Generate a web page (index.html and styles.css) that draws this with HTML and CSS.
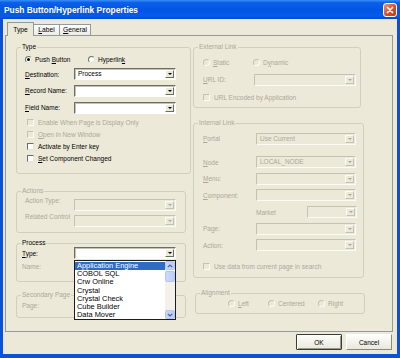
FILE: index.html
```html
<!doctype html>
<html>
<head>
    <meta charset="UTF-8">
    <title>Push Button/Hyperlink Properties</title>
    <link rel="stylesheet" href="styles.css">
</head>
<body>
<div class="window">
    <div class="titlebar">
        <span class="title">Push Button/Hyperlink Properties</span>
        <span class="close">
            <svg width="8" height="8" viewBox="0 0 8 8"><path d="M1.5 1.5L6.5 6.5M6.5 1.5L1.5 6.5" stroke="#fff" stroke-width="1.7" stroke-linecap="round"/></svg>
        </span>
    </div>
    <div class="frame">
        <div class="tabs">
            <div class="tab t-type active">Type</div>
            <div class="tab t-label"><u>L</u>abel</div>
            <div class="tab t-general"><u>G</u>eneral</div>
        </div>
        <div class="panel">
            <div class="col-left">
                <fieldset class="group g-type">
                    <legend>Type</legend>
                    <div class="rows">
                        <div class="row h14">
                            <span class="radio on w63"><i></i><span>Push <u>B</u>utton</span></span>
                            <span class="radio"><i></i><span>Hyperlin<u>k</u></span></span>
                        </div>
                        <div class="row h16">
                            <span class="lbl w49"><u>D</u>estination:</span>
                            <div class="sel"><span class="val">Process</span><span class="btn"></span></div>
                        </div>
                        <div class="row h17">
                            <span class="lbl w49"><u>R</u>ecord Name:</span>
                            <div class="sel"><span class="val"></span><span class="btn"></span></div>
                        </div>
                        <div class="row h17">
                            <span class="lbl w49"><u>F</u>ield Name:</span>
                            <div class="sel"><span class="val"></span><span class="btn"></span></div>
                        </div>
                        <div class="row h12 ind"><span class="check off"><i></i><span>Enable When Page is Display Only</span></span></div>
                        <div class="row h12 ind"><span class="check off"><i></i><span><u>O</u>pen in New Window</span></span></div>
                        <div class="row h12 ind"><span class="check"><i></i><span>Activate by Enter key</span></span></div>
                        <div class="row h12 ind"><span class="check"><i></i><span><u>S</u>et Component Changed</span></span></div>
                    </div>
                </fieldset>

                <fieldset class="group g-actions">
                    <legend class="dis">Actions</legend>
                    <div class="rows">
                        <div class="row h14 hi">
                            <span class="lbl w49 dis">Action Type:</span>
                            <div class="sel off"><span class="val"></span><span class="btn"></span></div>
                        </div>
                        <div class="row h14 hi gap2">
                            <span class="lbl w49 dis">Related Control</span>
                            <div class="sel off"><span class="val"></span><span class="btn"></span></div>
                        </div>
                    </div>
                </fieldset>

                <fieldset class="group g-process">
                    <legend>Process</legend>
                    <div class="rows">
                        <div class="row h12">
                            <span class="lbl w52"><u>T</u>ype:</span>
                            <div class="dropwrap">
                                <div class="sel"><span class="val"></span><span class="btn"></span></div>
                                <div class="droplist">
                                    <div class="items">
                                        <div class="item cur">Application Engine</div>
                                        <div class="item">COBOL SQL</div>
                                        <div class="item">Crw Online</div>
                                        <div class="item">Crystal</div>
                                        <div class="item">Crystal Check</div>
                                        <div class="item">Cube Builder</div>
                                        <div class="item">Data Mover</div>
                                    </div>
                                    <div class="vscroll">
                                        <span class="sb-btn"><svg width="6" height="4" viewBox="0 0 6 4"><path d="M0.8 3.2L3 1L5.2 3.2" fill="none" stroke="#4d6185" stroke-width="1.2"/></svg></span>
                                        <span class="sb-thumb"></span>
                                        <span class="sb-track"></span>
                                        <span class="sb-btn"><svg width="6" height="4" viewBox="0 0 6 4"><path d="M0.8 0.8L3 3L5.2 0.8" fill="none" stroke="#4d6185" stroke-width="1.2"/></svg></span>
                                    </div>
                                </div>
                            </div>
                        </div>
                        <div class="row h14">
                            <span class="lbl w52 dis">Name:</span>
                        </div>
                    </div>
                </fieldset>

                <fieldset class="group g-second">
                    <legend class="dis">Secondary Page</legend>
                    <div class="rows">
                        <div class="row h12">
                            <span class="lbl w52 dis">Page:</span>
                            <div class="sel off"><span class="val"></span><span class="btn"></span></div>
                        </div>
                    </div>
                </fieldset>
            </div>

            <div class="col-right">
                <fieldset class="group g-ext">
                    <legend class="dis">External Link</legend>
                    <div class="rows">
                        <div class="row h12">
                            <span class="radio off w50"><i></i><span><u>S</u>tatic</span></span>
                            <span class="radio off"><i></i><span>D<u>y</u>namic</span></span>
                        </div>
                        <div class="row h23">
                            <span class="lbl w51 dis"><u>U</u>RL ID:</span>
                            <div class="sel off"><span class="val"></span><span class="btn"></span></div>
                        </div>
                        <div class="row h12">
                            <span class="check off"><i></i><span>URL Encoded by Application</span></span>
                        </div>
                    </div>
                </fieldset>

                <fieldset class="group g-int">
                    <legend class="dis">Internal Link</legend>
                    <div class="rows">
                        <div class="row h17">
                            <span class="lbl w53 dis"><u>P</u>ortal</span>
                            <div class="sel off w100"><span class="val">Use Current</span><span class="btn"></span></div>
                        </div>
                        <div class="row h166 gap7">
                            <span class="lbl w53 dis"><u>N</u>ode</span>
                            <div class="sel off w100"><span class="val">LOCAL_NODE</span><span class="btn"></span></div>
                        </div>
                        <div class="row h166">
                            <span class="lbl w53 dis"><u>M</u>enu:</span>
                            <div class="sel off w100"><span class="val"></span><span class="btn"></span></div>
                        </div>
                        <div class="row h166">
                            <span class="lbl w53 dis"><u>C</u>omponent:</span>
                            <div class="sel off w100"><span class="val"></span><span class="btn"></span></div>
                        </div>
                        <div class="row h166">
                            <span class="lbl w53"></span>
                            <span class="lbl w51 dis">Market</span>
                            <div class="sel off w50"><span class="val"></span><span class="btn"></span></div>
                        </div>
                        <div class="row h166">
                            <span class="lbl w53 dis">Page:</span>
                            <div class="sel off w100"><span class="val"></span><span class="btn"></span></div>
                        </div>
                        <div class="row h166">
                            <span class="lbl w53 dis">Action:</span>
                            <div class="sel off w100"><span class="val"></span><span class="btn"></span></div>
                        </div>
                        <div class="row h12 gap7">
                            <span class="check off"><i></i><span>Use data from current page in search</span></span>
                        </div>
                    </div>
                </fieldset>

                <fieldset class="group g-align">
                    <legend class="dis">Alignment</legend>
                    <div class="rows">
                        <div class="row h12">
                            <span class="radio off w40"><i></i><span><u>L</u>eft</span></span>
                            <span class="radio off w50"><i></i><span>Centered</span></span>
                            <span class="radio off"><i></i><span>Right</span></span>
                        </div>
                    </div>
                </fieldset>
            </div>
        </div>
        <div class="buttons">
            <button type="button" class="button default">OK</button>
            <button type="button" class="button">Cancel</button>
        </div>
    </div>
</div>
</body>
</html>
```

FILE: styles.css
```css
* {
    box-sizing: border-box;
}

body {
    margin: 0;
    background: #fff;
    color: #000;
    font-family: "Liberation Sans", Arial, sans-serif;
    font-size: 6.5px;
}

.window {
    width: 400px;
    height: 358px;
    display: flex;
    flex-direction: column;
    background: #0a50d8;
}

.titlebar {
    flex: none;
    height: 19px;
    display: flex;
    align-items: center;
    padding: 0 3px 0 4px;
    background: linear-gradient(#3c8ef6 0%, #0b5fe9 14%, #0055e5 50%, #075be9 86%, #0048cc 100%);
}

.titlebar .title {
    flex: 1;
    color: #fff;
    font-size: 8.4px;
    font-weight: bold;
}

.titlebar .close {
    width: 14px;
    height: 14px;
    display: flex;
    align-items: center;
    justify-content: center;
    border: 1px solid #fff;
    border-radius: 3px;
    background: linear-gradient(135deg, #f0906e, #d8502a 55%, #c03816);
}

.frame {
    flex: 1;
    margin: 0 3px 4px;
    padding: 3px 4px 0 2px;
    background: #ece9d8;
    display: flex;
    flex-direction: column;
}

/* tabs */
.tabs {
    height: 14px;
    margin: 0 0 -1px 2px;
    display: flex;
    align-items: flex-end;
    position: relative;
    z-index: 1;
}

.tab {
    height: 11px;
    margin-bottom: 1px;
    border: 1px solid #919b9c;
    border-left: none;
    border-bottom: none;
    background: linear-gradient(#fefefe, #ecebe6);
    font-size: 6.7px;
    line-height: 10px;
    text-align: center;
}

.tab.active {
    height: 14px;
    margin-bottom: 0;
    border-left: 1px solid #919b9c;
    background: #ece9d8;
    line-height: 13px;
}

.t-type { width: 27px; }
.t-label { width: 26px; }
.t-general { width: 31px; }

.panel {
    flex: none;
    height: 297px;
    padding: 7px 0 0 10px;
    border: 1px solid #919b9c;
    background: #ece9d8;
    display: flex;
    align-items: flex-start;
}

.col-left {
    width: 175px;
    display: flex;
    flex-direction: column;
}

.col-right {
    width: 173px;
    margin-left: 2px;
    display: flex;
    flex-direction: column;
}

/* group boxes */
.group {
    min-width: 0;
    margin: 0;
    padding: 0;
    border: 1px solid #d0d0bf;
    border-radius: 3px;
}

.group legend {
    height: 8px;
    margin-left: 4px;
    padding: 0 1px;
    line-height: 8px;
}

.g-type { height: 131px; }
.g-type .rows { padding: 1px 0 0 8px; }

.g-actions { width: 170px; height: 46px; margin-top: 13px; }
.g-actions .rows { padding: 2px 0 0 8px; }

.g-process { width: 170px; height: 43px; margin-top: 6px; }
.g-process .rows { padding-left: 5px; }

.g-second { width: 170px; height: 27px; margin-top: 9px; }
.g-second .rows { padding-left: 5px; }

.g-ext { width: 168px; height: 65px; }
.g-ext .rows { padding: 5px 0 0 9px; }

.g-int { width: 171px; height: 159px; margin-top: 11px; }
.g-int .rows { padding: 3px 0 0 9px; }

.g-align { width: 170px; height: 25px; margin: 11px 0 0 2px; }
.g-align .rows { padding-left: 32px; }

/* rows */
.row {
    display: flex;
    align-items: center;
    white-space: nowrap;
}

.row.hi { align-items: flex-start; }
.row.hi .lbl { line-height: 8px; }
.row.hi .sel { margin-top: 2px; }

.h12 { height: 12px; }
.h14 { height: 14px; }
.h16 { height: 16px; }
.h17 { height: 17px; }
.h23 { height: 23px; }
.h166 { height: 16.6px; }
.gap2 { margin-top: 2px; }
.gap7 { margin-top: 7px; }
.ind { padding-left: 2px; }

.lbl { flex: none; }
.w40 { width: 40px; }
.w49 { width: 49px; }
.w50 { width: 50px; }
.w51 { width: 51px; }
.w52 { width: 52px; }
.w53 { width: 53px; }
.w63 { width: 63px; }

.dis { color: #aca899; }

/* combo boxes */
.sel {
    width: 102px;
    height: 12px;
    display: flex;
    align-items: center;
    background: #fff;
    border: 1px solid;
    border-color: #6e6e60 #fff #fff #6e6e60;
    box-shadow: inset 1px 1px 0 #c4c2b6;
}

.sel.w100 { width: 100px; }
.sel.w50 { width: 50px; }

.sel .val {
    flex: 1;
    height: 10px;
    padding-left: 3px;
    line-height: 10px;
    overflow: hidden;
}

.sel .btn {
    width: 9px;
    height: 8px;
    margin-right: 1px;
    display: flex;
    align-items: center;
    justify-content: center;
    background: #ece9d8;
    border: 1px solid;
    border-color: #fff #6e6e60 #6e6e60 #fff;
}

.sel .btn::after {
    content: "";
    border-left: 2px solid transparent;
    border-right: 2px solid transparent;
    border-top: 2px solid #000;
}

.sel.off {
    background: #ece9d8;
    border-color: #c5c2b2 #fbfbf8 #fbfbf8 #c5c2b2;
    box-shadow: none;
}

.sel.off .val { color: #aca899; }
.sel.off .btn { border-color: #fbfbf8 #c5c2b2 #c5c2b2 #fbfbf8; }
.sel.off .btn::after { border-top-color: #aca899; }

/* radios and checks */
.radio,
.check {
    display: flex;
    align-items: center;
}

.radio i,
.check i {
    width: 7px;
    height: 7px;
    margin-right: 3px;
    display: flex;
    align-items: center;
    justify-content: center;
    background: #fff;
    border: 1px solid;
    border-color: #6e6e60 #e6e4da #e6e4da #6e6e60;
}

.radio i { border-radius: 50%; }

.radio.on i::after {
    content: "";
    width: 3px;
    height: 3px;
    border-radius: 50%;
    background: #000;
}

.check i { margin-right: 4px; }

.radio.off,
.check.off { color: #aca899; }

.radio.off i,
.check.off i {
    background: #ece9d8;
    border-color: #c5c2b2 #fbfbf8 #fbfbf8 #c5c2b2;
}

/* open dropdown */
.dropwrap {
    position: relative;
}

.droplist {
    position: absolute;
    top: calc(100% + 1px);
    left: 0;
    z-index: 2;
    width: 102px;
    height: 60px;
    display: flex;
    background: #fff;
    border: 1px solid #1c1c1c;
}

.items {
    flex: 1;
    padding-top: 1px;
}

.item {
    height: 8.2px;
    padding-left: 2px;
    font-size: 7.4px;
    line-height: 8.2px;
    white-space: nowrap;
}

.item.cur {
    background: #316ac5;
    color: #fff;
}

.vscroll {
    width: 10px;
    display: flex;
    flex-direction: column;
    background: #f3f1ea;
}

.sb-btn {
    height: 9px;
    display: flex;
    align-items: center;
    justify-content: center;
    background: linear-gradient(90deg, #c8d6fb, #b9cdf8);
    border: 1px solid #b2c6f2;
    border-radius: 2px;
}

.sb-thumb {
    height: 11px;
    margin-top: 1px;
    background: linear-gradient(90deg, #cbd9fc, #bcd0fa);
    border: 1px solid #b2c6f2;
    border-radius: 2px;
}

.sb-track {
    flex: 1;
}

/* dialog buttons */
.buttons {
    margin-top: 2px;
    padding-right: 1px;
    display: flex;
    justify-content: flex-end;
    gap: 4px;
}

.button {
    width: 46px;
    height: 16px;
    padding: 0;
    font-family: "Liberation Sans", Arial, sans-serif;
    font-size: 6.5px;
    color: #000;
    background: linear-gradient(#fdfdfb, #e9e7dd);
    border: 1px solid;
    border-color: #fff #8a8a7c #8a8a7c #fff;
    border-radius: 1px;
}

.button.default {
    border-color: #3c3c36;
    box-shadow: inset 1px 1px 0 #fff, inset -1px -1px 0 #9a9a8c;
}
```
